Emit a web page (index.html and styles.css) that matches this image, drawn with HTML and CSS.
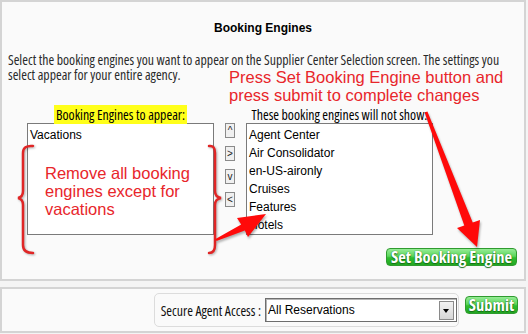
FILE: index.html
```html
<!DOCTYPE html>
<html lang="en">
<head>
  <meta charset="UTF-8">
  <meta name="viewport" content="width=device-width, initial-scale=1.0">
  <title>Booking Engines</title>
  <link rel="stylesheet" href="styles.css">
</head>
<body>
  <div class="panel engines">
    <h1>Booking Engines</h1>
    <p class="intro">Select the booking engines you want to appear on the Supplier Center Selection screen. The settings you<br>select appear for your entire agency.</p>

    <div class="lists">
      <div class="col">
        <div class="col-label"><span class="hl">Booking Engines to appear:</span></div>
        <div class="listbox">
          <div class="item">Vacations</div>
        </div>
      </div>
      <div class="movers">
        <button class="mover">^</button>
        <button class="mover">&gt;</button>
        <button class="mover">v</button>
        <button class="mover">&lt;</button>
      </div>
      <div class="col">
        <div class="col-label">These booking engines will not show:</div>
        <div class="listbox">
          <div class="item">Agent Center</div>
          <div class="item">Air Consolidator</div>
          <div class="item">en-US-aironly</div>
          <div class="item">Cruises</div>
          <div class="item">Features</div>
          <div class="item">Hotels</div>
        </div>
      </div>
    </div>

    <div class="actions">
      <button class="green-btn set-btn">Set Booking Engine</button>
    </div>

    <!-- annotations drawn over the screen -->
    <div class="note note-top">Press Set Booking Engine button and<br>press submit to complete changes</div>
    <div class="note note-left">Remove all booking<br>engines except for<br>vacations</div>
    <svg class="marks" width="528" height="334" viewBox="0 0 528 334">
      <path class="brace" d="M33,146 Q23,145 23,153 L23,191 Q23,197 18,198 Q23,199 23,205 L23,245 Q23,253 33,253"/>
      <path class="brace" d="M209,146 Q215,145 215,153 L215,191 Q215,197 221,198 Q215,199 215,205 L215,245 Q215,253 209,253"/>
      <polygon class="arrow" points="215.5,239.1 241.2,224.5 237,218 266,214 248,237 244.8,230.5 216.5,240.9"/>
      <polygon class="arrow" points="424.6,112.5 427.4,111.5 472.7,222.4 480,220 477,247 457,228 464.3,225.6"/>
    </svg>
  </div>

  <div class="panel access">
    <div class="access-box">
      <label class="access-label">Secure Agent Access :</label>
      <div class="fake-select">
        <span>All Reservations</span>
        <span class="drop"></span>
      </div>
    </div>
    <button class="green-btn submit-btn">Submit</button>
  </div>
</body>
</html>
```

FILE: styles.css
```css
* { box-sizing: border-box; }
body {
  margin: 0;
  background: #f4f4f4;
  font-family: "Open Sans", "Liberation Sans", sans-serif;
  font-stretch: 75%;
  font-size: 13.8px;
  color: #2a2a2a;
}
.panel {
  position: relative;
  width: 526px;
  background: #fafafa;
  border: 2px solid #d4d4d4;
}
.engines {
  height: 281px;
  padding: 19px 6px 0 6px;
}
h1 {
  margin: 0;
  font: bold 12px/14px "Liberation Sans", sans-serif;
  color: #000;
  text-align: center;
}
.intro {
  margin: 17px 0 0;
  line-height: 15px;
  white-space: nowrap;
}
.lists {
  display: grid;
  grid-template-columns: 187px 10px 187px;
  column-gap: 11px;
  margin: 25px 0 0 19px;
}
.col-label {
  height: 16px;
  line-height: 15px;
  color: #000;
  text-align: center;
  white-space: nowrap;
}
.hl {
  background: #ffff1a;
  padding: 0 2px;
}
.listbox {
  height: 112px;
  border: 1px solid #7a7a7a;
  background: #fff;
  padding: 2px;
}
.item {
  font: 12px/18px "Liberation Sans", sans-serif;
  color: #000;
}
.movers {
  display: flex;
  flex-direction: column;
  gap: 8px;
  padding-top: 16px;
}
.mover {
  width: 10px;
  height: 15px;
  padding: 0;
  border: 1px solid #8a8a8a;
  background: #f0f0f0;
  font: 10px/13px "Liberation Sans", sans-serif;
  color: #222;
}
.actions {
  display: flex;
  justify-content: flex-end;
  margin: 13px 1px 0 0;
}
.green-btn {
  height: 18px;
  padding: 0;
  border: 1px solid #2f9b2f;
  border-radius: 4px;
  background: linear-gradient(#96ec96 0%, #5bd65b 45%, #2fbd2f 55%, #23a823 100%);
  color: #fff;
  font-family: "Open Sans", "Liberation Sans", sans-serif;
  font-stretch: 75%;
  font-weight: bold;
  font-size: 16.5px;
  line-height: 16px;
  white-space: nowrap;
  text-shadow: 0 0 1px #176b17, 0 1px 1px #176b17;
}
.set-btn { width: 131px; }
.submit-btn { width: 53px; margin-top: 3px; }

.note {
  position: absolute;
  font: 16.5px/18px "Liberation Sans", sans-serif;
  color: #e8262b;
  white-space: nowrap;
}
.note-top { left: 227px; top: 66px; }
.note-left { left: 43px; top: 162px; }
.marks {
  position: absolute;
  left: -2px;
  top: -2px;
  overflow: visible;
  pointer-events: none;
}
.brace {
  fill: none;
  stroke: #e02626;
  stroke-width: 2.5;
  stroke-linecap: round;
  filter: drop-shadow(1px 1px 1px rgba(0, 0, 0, 0.3));
}
.arrow {
  fill: #ff0a0a;
  filter: drop-shadow(1px 2px 1px rgba(0, 0, 0, 0.3));
}

.access {
  height: 46px;
  margin-top: 6px;
  display: flex;
  justify-content: flex-end;
  align-items: flex-start;
  gap: 6px;
  padding: 4px 6px 0 0;
}
.access-box {
  display: flex;
  align-items: center;
  gap: 4px;
  height: 34px;
  padding: 0 1px 0 6px;
  border: 1px solid #dcdcdc;
  border-radius: 5px;
}
.access-label { color: #111; white-space: nowrap; }
.fake-select {
  display: flex;
  align-items: center;
  justify-content: space-between;
  width: 192px;
  height: 24px;
  padding: 0 2px 0 2px;
  border: 1px solid #6e6e6e;
  box-shadow: inset 1px 1px 0 #b5b5b5;
  background: #fff;
  font: 12px "Liberation Sans", sans-serif;
  font-stretch: normal;
  color: #000;
}
.drop {
  position: relative;
  width: 15px;
  height: 19px;
  border: 1px solid #8a8a8a;
  background: linear-gradient(#f2f2f2, #d6d6d6);
}
.drop::after {
  content: "";
  position: absolute;
  left: 3px;
  top: 7px;
  border-left: 3.5px solid transparent;
  border-right: 3.5px solid transparent;
  border-top: 4px solid #000;
}
```
